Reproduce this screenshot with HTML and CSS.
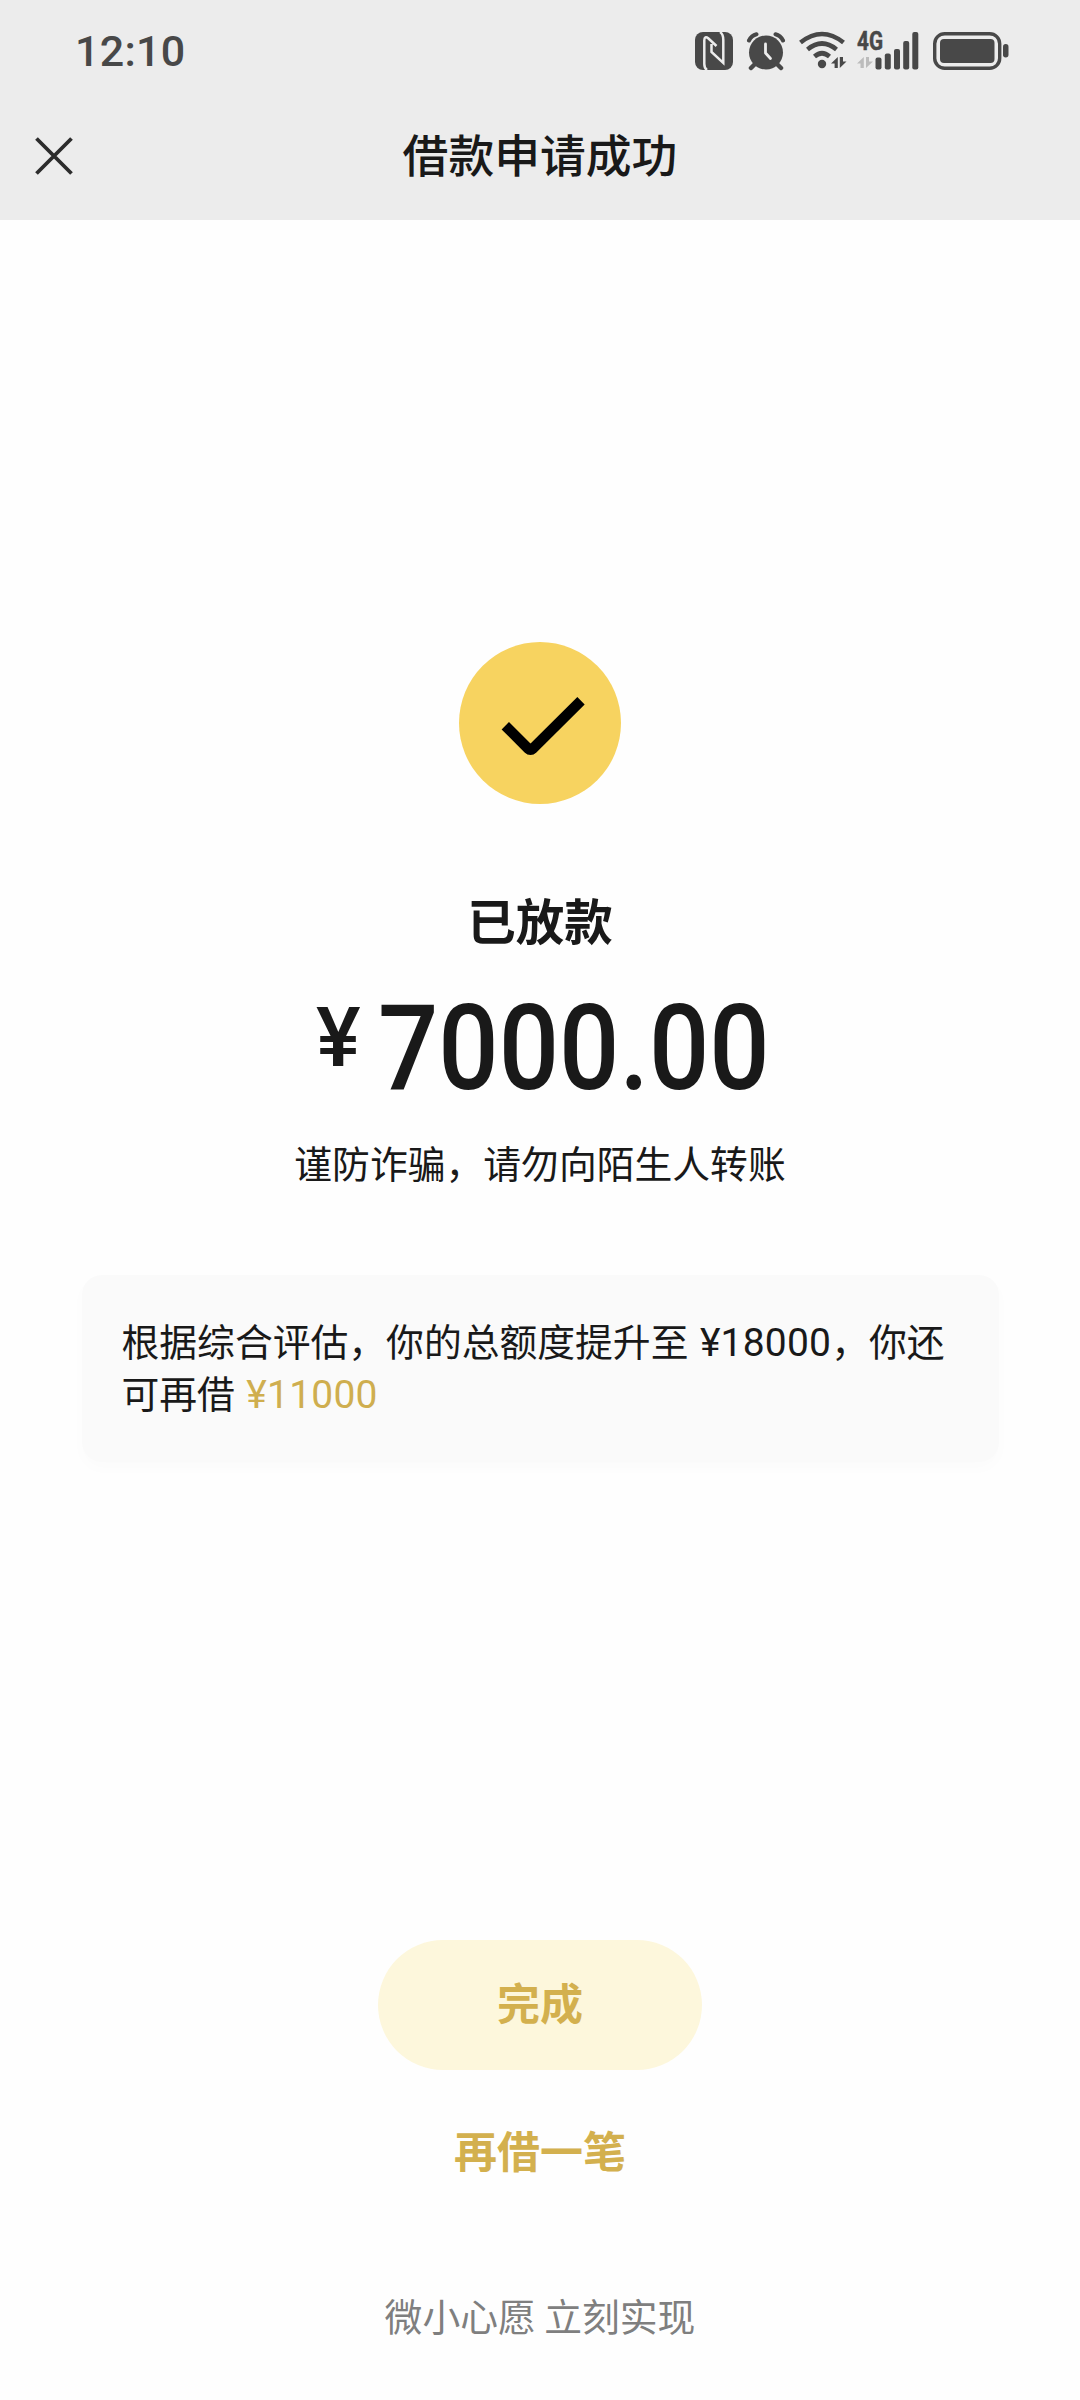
FILE: index.html
```html
<!DOCTYPE html>
<html lang="zh-CN">
<head>
<meta charset="utf-8">
<title>借款申请成功</title>
<link rel="stylesheet" href="styles.css">
</head>
<body>
<div class="screen">
  <header class="top">
    <div class="status">
      <span class="clock">12:10</span>
      <div class="status-icons">
        <svg class="icon" width="38" height="38" viewBox="0 0 38 38">
          <rect width="38" height="38" rx="8" fill="#484848"/>
          <path d="M12 38C9.800 36.500 9.300 35 9.300 32V8.500C9.300 5 11 4.500 13.200 6.300L21.500 14M16.500 12V20L28.300 31V8C28.300 3.500 27.500 1.500 25 0" fill="none" stroke="#ececec" stroke-width="2.500"/>
        </svg>
        <svg class="icon alarm" width="38" height="38" viewBox="0 0 38 38">
          <g fill="none" stroke="#484848" stroke-linecap="round">
            <path d="M2 8.500Q4.500 3.500 9.500 2.300M36 8.500Q33.500 3.500 28.500 2.300" stroke-width="4"/>
            <path d="M8 32L4 36M30 32L34 36" stroke-width="4.500"/>
          </g>
          <circle cx="19" cy="20.500" r="17" fill="#484848"/>
          <path d="M18.500 12V21L23.500 26.500" fill="none" stroke="#ececec" stroke-width="2.800" stroke-linecap="round" stroke-linejoin="round"/>
        </svg>
        <svg class="icon wifi" width="48" height="38" viewBox="0 0 48 38">
          <g fill="none" stroke="#484848" stroke-width="4.600">
            <path d="M1.500 10.500Q23 -6.500 44.500 10.500"/>
            <path d="M8.500 17.500Q23 5.500 37.500 17.500"/>
            <path d="M15.500 24.500Q23 18 30.500 24.500"/>
          </g>
          <circle cx="23" cy="32" r="4.200" fill="#484848"/>
          <path d="M38.800 25V36H35.600V31.500H32L38.800 25ZM40.800 36V25H44V29.500H47.500L40.800 36Z" fill="#484848"/>
        </svg>
        <svg class="icon signal" width="62" height="38" viewBox="0 0 62 38">
          <text x="0" y="18" class="network" textLength="26" lengthAdjust="spacingAndGlyphs">4G</text>
          <path d="M6.800 25V36H3.500V31.500H0L6.800 25ZM9 36V25H12V29.500H16L9 36Z" fill="#bcbcbc"/>
          <g fill="#484848">
            <rect x="18.500" y="25.500" width="6" height="12" rx="2"/>
            <rect x="27.800" y="21.500" width="6" height="16" rx="2"/>
            <rect x="37" y="17" width="6" height="20.500" rx="2"/>
            <rect x="46.200" y="9" width="6" height="28.500" rx="2"/>
            <rect x="55.300" y="0" width="6" height="37.500" rx="2"/>
          </g>
        </svg>
        <svg class="icon battery" width="76" height="38" viewBox="0 0 76 38">
          <rect x="1.700" y="1.700" width="65" height="34.600" rx="10" fill="none" stroke="#484848" stroke-width="3.400"/>
          <rect x="7" y="7" width="54.500" height="24" rx="4" fill="#484848"/>
          <rect x="70" y="12" width="5.500" height="13.500" rx="2.700" fill="#484848"/>
        </svg>
      </div>
    </div>
    <div class="nav">
      <svg class="close" width="38" height="38" viewBox="0 0 38 38"><path d="M1.500 1.500L36.500 36.500M36.500 1.500L1.500 36.500" fill="none" stroke="#2c2c2c" stroke-width="3.800"/></svg>
      <h1 class="title">借款申请成功</h1>
    </div>
  </header>
  <main class="result">
    <svg class="success" width="162" height="162" viewBox="0 0 162 162">
      <circle cx="81" cy="81" r="81" fill="#f7d360"/>
      <path d="M46.300 83.700L69.300 106.700Q71.500 108.900 73.700 106.700L122 58.700" fill="none" stroke="#000" stroke-width="10.400"/>
    </svg>
    <h2 class="state">已放款</h2>
    <div class="amount"><span class="currency">¥</span><span class="value">7000.00</span></div>
    <p class="warning">谨防诈骗，请勿向陌生人转账</p>
    <p class="card">根据综合评估，你的总额度提升至 <span class="num">¥18000</span>，你还可再借 <span class="num gold">¥11000</span></p>
  </main>
  <footer class="actions">
    <button class="done">完成</button>
    <a class="again">再借一笔</a>
    <p class="slogan">微小心愿 立刻实现</p>
  </footer>
</div>
</body>
</html>
```
FILE: styles.css
```css
* { box-sizing: border-box; margin: 0; padding: 0; }
body { width: 1080px; background: #fefefe; color: #191919; font-family: "Noto Sans CJK SC", sans-serif; }
.screen { height: 2400px; display: flex; flex-direction: column; }
.top { height: 220px; background: #ececec; }
.status { height: 92px; padding: 0 71px 0 75px; display: flex; justify-content: space-between; }
.clock { margin-top: 25px; font: 500 43px/52px Roboto, sans-serif; letter-spacing: 0.3px; color: #484848; }
.status-icons { display: flex; margin-top: 32px; }
.icon { display: block; overflow: visible; }
.alarm { margin-left: 14px; }
.wifi { margin-left: 14px; }
.signal { margin-left: 10px; }
.battery { margin-left: 14px; }
.network { font: 700 25px Roboto, sans-serif; fill: #484848; stroke: #484848; stroke-width: .5px; }
.nav { height: 128px; display: grid; grid-template-columns: 38px 1fr 38px; align-items: center; padding: 0 35px; }
.close { margin-bottom: 1px; }
.title { font-size: 45.800px; font-weight: 500; line-height: 64px; text-align: center; margin-bottom: 6px; }
.result { height: 1720px; padding: 422px 82px 0; display: flex; flex-direction: column; align-items: center; }
.success { display: block; flex: none; }
.state { margin-top: 80px; font-size: 48.500px; line-height: 70px; font-weight: 700; }
.amount { margin-top: 35px; width: 448px; height: 120px; display: flex; align-items: flex-start; font-family: Roboto, sans-serif; font-weight: 500; }
.currency { flex: none; width: 62px; font-size: 84px; line-height: 98px; }
.value { flex: none; font-size: 118px; line-height: 120px; transform: scaleX(0.900); transform-origin: left; }
.warning { margin-top: 25px; font-size: 37.800px; line-height: 56px; }
.card { margin-top: 85px; width: 917px; height: 187px; flex: none; padding: 39px 38px 0 40px; border-radius: 20px; background: #fafafa; box-shadow: 0 6px 16px rgba(0,0,0,.015); font-size: 37.800px; line-height: 52px; }
.num { margin-left: 3px; font-family: Roboto, sans-serif; font-size: 39px; line-height: 1; letter-spacing: .2px; }
.gold { color: #cfae4f; }
.actions { display: flex; flex-direction: column; align-items: center; }
.done { width: 324px; height: 130px; padding-bottom: 8px; border: 0; border-radius: 65px; background: #fdf7dc; color: #d3b04e; font: 700 43px/64px "Noto Sans CJK SC", sans-serif; }
.again { margin-top: 47px; color: #d3b04e; font-size: 43px; line-height: 64px; font-weight: 700; }
.slogan { margin-top: 106px; font-size: 37.800px; line-height: 56px; color: #7f7f7f; }
```
